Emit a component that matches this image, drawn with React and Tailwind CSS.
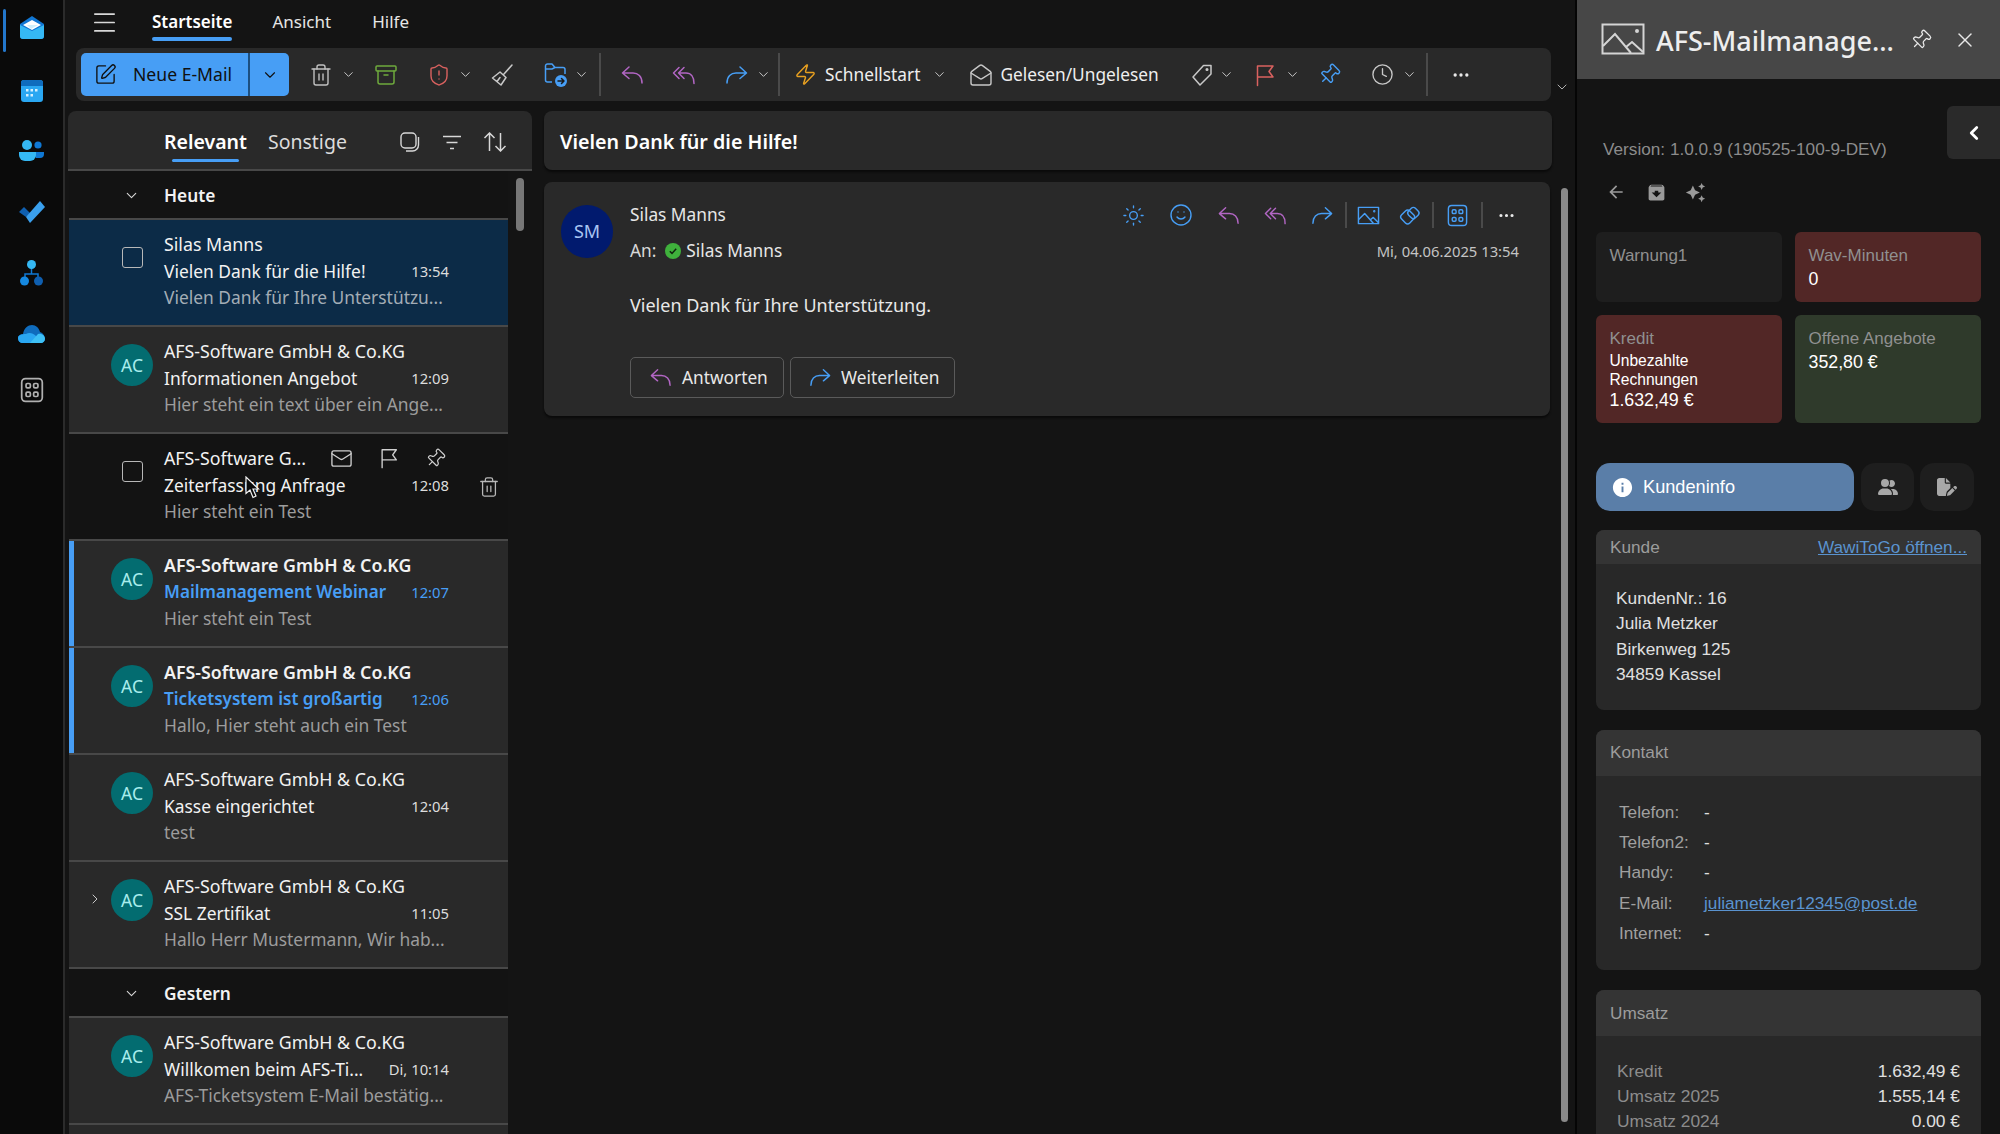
import { Archive, ChevronDown, ChevronLeft, ChevronRight, Clock, Ellipsis, Mail, MailOpen, Menu, Pin, ShieldAlert, Smile, Sun, SquarePen, Trash2, X, Zap } from 'lucide-react';
import { MdArchive, MdArrowBack, MdAutoAwesome, MdInfo } from 'react-icons/md';
import { FaFilePen, FaUserGroup } from 'react-icons/fa6';

const Ic = ({ className = '', size = 24, sw = 1.5, children }) => (
  <svg width={size} height={size} viewBox="0 0 24 24" fill="none" stroke="currentColor" strokeWidth={sw} strokeLinecap="round" strokeLinejoin="round" className={`shrink-0 ${className}`}>
    {children}
  </svg>
);

const ReplyIcon = (p) => <Ic {...p}><path d="M9 4 L2.5 10 L9 15.5 M2.5 10 H13 C18 10 22 13.5 22 20" /></Ic>;
const ReplyAllIcon = (p) => <Ic {...p}><path d="M7 4.5 L1.5 10 L7 15.5 M12 4.5 L6.5 10 L12 15.5 M6.5 10 H14 C19 10 22 14 22 20.5" /></Ic>;
const ForwardIcon = (p) => <Ic {...p}><path d="M15 4 L21.5 10 L15 15.5 M21.5 10 H11 C6 10 2 13.5 2 20" /></Ic>;
const FlagIcon = (p) => <Ic {...p}><path d="M4.5 22.5 V3 H20 L16 8.5 L20 14 H4.5" /></Ic>;
const TagIcon = (p) => <Ic {...p}><path d="M13.5 2.5 H21 V11 L10 22 L3 14 Z" /><circle cx="17" cy="6.5" r="0.8" fill="currentColor" /></Ic>;
const BroomIcon = (p) => <Ic {...p}><path d="M22 2 L14 11 M10 9 L16 14.5 L11 22 L2.5 15 Z M7 18.5 L10 14.5" /></Ic>;
const GridIcon = (p) => (
  <Ic {...p}>
    <rect x="2.5" y="1.5" width="19" height="21" rx="3.5" />
    <rect x="6.5" y="6" width="4" height="4" rx="1.2" />
    <rect x="13.5" y="6" width="4" height="4" rx="1.2" />
    <rect x="6.5" y="14" width="4" height="4" rx="1.2" />
    <rect x="13.5" y="14" width="4" height="4" rx="1.2" />
  </Ic>
);
const ImgIcon = (p) => (
  <Ic {...p}>
    <path d="M1.5 3.5 H22.5 V20.5 H1.5 Z" />
    <path d="M2 16 L8 10 L17 20 M14 16.5 L17 14 L22 19" />
    <circle cx="18" cy="7.5" r="0.5" fill="currentColor" />
  </Ic>
);
const LoopIcon = (p) => (
  <Ic {...p}>
    <rect x="3" y="7.5" width="12" height="12" rx="3.2" transform="rotate(45 9 13.5)" />
    <rect x="10" y="4.5" width="10" height="10" rx="3" transform="rotate(45 15 9.5)" />
  </Ic>
);
const FolderMove = ({ className = '' }) => (
  <svg width="24" height="26" viewBox="0 0 24 26" fill="none" className={`shrink-0 ${className}`}>
    <path d="M8 20 H3.5 A2 2 0 0 1 1.5 18 V4 A2 2 0 0 1 3.5 2 H8 L11 5.5 H19 A2 2 0 0 1 21 7.5 V12 M1.5 7 H8 L11 5.5" stroke="#479ef5" strokeWidth="1.5" strokeLinejoin="round" />
    <circle cx="17" cy="19" r="6" fill="#479ef5" />
    <path d="M14 19 H19.5 M17.5 16.5 L20 19 L17.5 21.5" stroke="#1a1a1a" strokeWidth="1.5" strokeLinecap="round" strokeLinejoin="round" />
  </svg>
);

const Chev = ({ className = '' }) => <ChevronDown size={15} strokeWidth={1.5} className={`shrink-0 text-[#d0d0d0] ${className}`} />;
const Sep = ({ className = '' }) => <div className={`h-[43px] w-[2px] shrink-0 bg-[#4a4a4a] ${className}`} />;

const RailMail = () => (
  <svg width="26" height="24" viewBox="0 0 26 24">
    <path d="M13 0 L25 8 V20 a3 3 0 0 1 -3 3 H4 a3 3 0 0 1 -3 -3 V8 Z" fill="#1177d4" />
    <path d="M4 9 L13 4 L22 9 L13 14 Z" fill="#fff" />
    <path d="M1 9 L13 15 L25 9 V20 a3 3 0 0 1 -3 3 H4 a3 3 0 0 1 -3 -3 Z" fill="#35b8f4" />
    <path d="M8 9 H19 L12 13 Z" fill="#cfeffc" />
  </svg>
);
const RailCalendar = () => (
  <svg width="22" height="22" viewBox="0 0 22 22">
    <rect x="0" y="0" width="22" height="22" rx="3" fill="#2aa7f2" />
    <path d="M0 6 V3 a3 3 0 0 1 3 -3 H19 a3 3 0 0 1 3 3 V6 Z" fill="#0f6cbd" />
    {[5, 9.5, 14].map((x) => <rect key={x} x={x} y="9" width="2.5" height="2.5" fill="#d5f0ff" />)}
    {[5, 9.5].map((x) => <rect key={x} x={x} y="14" width="2.5" height="2.5" fill="#d5f0ff" />)}
  </svg>
);
const RailPeople = () => (
  <svg width="25" height="21" viewBox="0 0 25 21">
    <circle cx="19" cy="5" r="3.6" fill="#0f78d4" />
    <path d="M14 12 H25 V14 a4 4 0 0 1 -4 4 H17 Z" fill="#0f78d4" />
    <circle cx="8" cy="5" r="5" fill="#35b8f4" />
    <path d="M0 12 H17 V15 a6 6 0 0 1 -6 6 H6 a6 6 0 0 1 -6 -6 Z" fill="#35b8f4" />
  </svg>
);
const RailTodo = () => (
  <svg width="26" height="22" viewBox="0 0 26 22">
    <path d="M0 11 L5 6 L12 13 L7 16 Z" fill="#0f5fb0" />
    <path d="M7 16 L21 0 L26 6 L11 22 Z" fill="#3aa0ee" />
  </svg>
);
const RailOrg = () => (
  <svg width="23" height="26" viewBox="0 0 23 26">
    <path d="M11.5 8 V14 M5 18 V14 H18 V18" stroke="#0f78d4" strokeWidth="1.5" fill="none" />
    <circle cx="11.5" cy="4.5" r="4.5" fill="#35b8f4" />
    <circle cx="4.5" cy="21" r="4.5" fill="#1588e0" />
    <circle cx="18.5" cy="21" r="4.5" fill="#0f5fb0" />
  </svg>
);
const RailCloud = () => (
  <svg width="27" height="18" viewBox="0 0 27 18">
    <path d="M5 9 C6 3 10 0 14 0 C18 0 21 3 22 7 C25 8 27 11 27 14 C27 16 25 18 23 18 H5 C2 18 0 16 0 13 C0 11 2 9 5 9 Z" fill="#0f6cbd" />
    <path d="M0 13 C0 10 4 9 8 9 C11 7 15 8 18 11 L24 18 H5 C2 18 0 16 0 13 Z" fill="#2aa7f2" />
    <path d="M12 18 L20 9 C24 8 27 11 27 14 C27 16 25 18 23 18 Z" fill="#3ec0f5" />
  </svg>
);

const TabItem = ({ children, active, className = '' }) => (
  <div className={`relative flex h-[48px] items-center pb-[4px] text-[17px] text-[#e6e6e6] ${active ? 'font-semibold text-white' : ''} ${className}`}>
    {children}
    {active && <div className="absolute bottom-[7px] left-0 h-[4px] w-full rounded-full bg-[#479ef5]" />}
  </div>
);

const Avatar = () => (
  <div className="flex h-[42px] w-[42px] items-center justify-center rounded-full bg-[#036c70] text-[17.5px] text-[#a8ecec]">AC</div>
);
const CheckBox = () => <div className="h-[21px] w-[21px] rounded-[3px] border-[1.5px] border-[#b8b8b8]" />;

const MailRow = ({ sender, subject, time, preview, unread, selected, expand, hover }) => (
  <div className={`relative flex h-[107px] shrink-0 border-b-[2px] border-[#484848] ${selected ? 'bg-[#0c2b47]' : hover ? 'bg-[#131313]' : 'bg-[#292929]'}`}>
    {unread && <div className="absolute inset-y-0 left-0 w-[5px] bg-[#479ef5]" />}
    {expand && <ChevronRight size={16} strokeWidth={1.5} className="absolute left-[18px] top-[29px] text-[#c8c8c8]" />}
    <div className={`w-[95px] shrink-0 ${selected || hover ? 'pl-[53px] pt-[27px]' : 'pl-[42px] pt-[17px]'}`}>
      {selected || hover ? <CheckBox /> : <Avatar />}
    </div>
    <div className="w-[285px] pt-[11px] text-[17.4px] leading-[26.5px]">
      <div className={`flex items-center whitespace-nowrap text-[17.8px] text-[#f2f2f2] ${unread ? 'font-semibold' : ''}`}>
        {sender}
        {hover && (
          <div className="ml-[24px] flex items-center gap-[25px] text-[#cfcfcf]">
            <Mail size={23} strokeWidth={1.4} />
            <Ic size={22}><path d="M4.5 22.5 V3 H20 L16 8.5 L20 14 H4.5" /></Ic>
            <Pin size={21} strokeWidth={1.4} className="rotate-45" />
          </div>
        )}
      </div>
      <div className={`flex items-center justify-between whitespace-nowrap ${unread ? 'text-[17.1px] font-semibold text-[#479ef5]' : 'text-[#f2f2f2]'}`}>
        <span>{subject}</span>
        <span className={`text-[14.8px] font-normal ${unread ? 'text-[#479ef5]' : 'text-[#dcdcdc]'}`}>{time}</span>
      </div>
      <div className={`whitespace-nowrap ${selected ? 'text-[#a3adb6]' : 'text-[#9c9c9c]'}`}>{preview}</div>
    </div>
    {hover && <Trash2 size={22} strokeWidth={1.4} className="absolute left-[409px] top-[42px] text-[#b8b8b8]" />}
    {hover && (
      <svg width="16" height="23" viewBox="0 0 16 23" className="absolute left-[176px] top-[42px]">
        <path d="M1 1 V17.5 L5 14 L8 21.5 L11 20 L8 13 H13.5 Z" fill="#0a0a0a" stroke="#f2f2f2" strokeWidth="1.2" />
      </svg>
    )}
  </div>
);

const GroupRow = ({ label }) => (
  <div className="flex h-[49px] shrink-0 items-center border-b-[2px] border-[#484848] bg-[#131313] pt-[2px] text-[17.3px] font-semibold text-[#f2f2f2]">
    <div className="w-[95px] pl-[54px]"><ChevronDown size={17} strokeWidth={1.5} className="text-[#d8d8d8]" /></div>
    {label}
  </div>
);

const StatusCard = ({ tone, label, children, h }) => (
  <div className={`rounded-[6px] pl-[13.5px] pt-[13px] ${h} ${tone}`}>
    <div className="text-[17px] leading-[22px] text-[#909090]">{label}</div>
    {children}
  </div>
);

const Section = ({ title, head, right, children }) => (
  <div className="overflow-hidden rounded-[8px] bg-[#282828]">
    <div className={`flex items-center justify-between bg-[#343434] px-[14px] pt-[1px] text-[17.2px] text-[#9c9c9c] ${head}`}>
      <span>{title}</span>
      {right}
    </div>
    {children}
  </div>
);

export default function App() {
  return (
    <div className="flex h-[1134px] w-[2000px] overflow-hidden bg-[#141414] font-['Noto_Sans',sans-serif] text-white">
      {/* Rail */}
      <nav className="relative flex w-[65px] shrink-0 flex-col items-center border-r-[2px] border-[#2b2b2b] bg-[#0a0a0a]">
        <div className="absolute left-[3px] top-[9px] h-[43px] w-[3px] rounded-full bg-[#2377cc]" />
        <div className="flex h-[56px] w-full items-center justify-center"><RailMail /></div>
        <div className="flex h-[62px] w-full items-center justify-center pt-[8px]"><RailCalendar /></div>
        <div className="flex h-[61px] w-full items-center justify-center pt-[4px]"><RailPeople /></div>
        <div className="flex h-[61px] w-full items-center justify-center pt-[4px]"><RailTodo /></div>
        <div className="flex h-[61px] w-full items-center justify-center pt-[4px]"><RailOrg /></div>
        <div className="flex h-[61px] w-full items-center justify-center pt-[4px]"><RailCloud /></div>
        <div className="mt-[-3px] flex h-[61px] w-full items-center justify-center text-[#b0b0b0]"><GridIcon size={26} sw={1.6} /></div>
      </nav>

      {/* Middle */}
      <main className="relative flex min-w-0 flex-1 flex-col">
        <div className="flex h-[48px] shrink-0 items-center pl-[25px]">
          <Menu size={29} strokeWidth={1.4} className="mb-[4px] text-[#d8d8d8]" />
          <TabItem active className="ml-[33px]">Startseite</TabItem>
          <TabItem className="ml-[40px]">Ansicht</TabItem>
          <TabItem className="ml-[41px]">Hilfe</TabItem>
        </div>

        {/* Ribbon */}
        <div className="ml-[11px] flex h-[53px] w-[1475px] shrink-0 items-center rounded-[8px] bg-[#292929] pl-[5px] text-[17.3px] text-[#eeeeee]">
          <div className="flex h-[43px] w-[208px] shrink-0 items-center rounded-[5px] bg-[#479ef5] text-[#101010]">
            <SquarePen size={23} strokeWidth={1.4} className="ml-[13px]" />
            <span className="ml-[16px] whitespace-nowrap text-[17.6px]">Neue E-Mail</span>
            <div className="ml-[16px] flex h-full flex-1 items-center justify-center border-l-[2px] border-[#1c4f80]"><ChevronDown size={18} strokeWidth={1.5} /></div>
          </div>
          <Trash2 size={24} strokeWidth={1.4} className="ml-[20px] shrink-0 text-[#c0c0c0]" />
          <Chev className="ml-[8px]" />
          <Archive size={24} strokeWidth={1.5} className="ml-[18px] shrink-0 text-[#6ea93d]" />
          <ShieldAlert size={24} strokeWidth={1.4} className="ml-[29px] shrink-0 text-[#d9615f]" />
          <Chev className="ml-[7px]" />
          <BroomIcon size={24} className="ml-[17px] text-[#c8c8c8]" />
          <FolderMove className="ml-[30px]" />
          <Chev className="ml-[6px]" />
          <Sep className="ml-[10px]" />
          <ReplyIcon size={24} className="ml-[19px] text-[#b266c4]" />
          <ReplyAllIcon size={24} className="ml-[28px] text-[#b266c4]" />
          <ForwardIcon size={24} className="ml-[29px] text-[#479ef5]" />
          <Chev className="ml-[7px]" />
          <Sep className="ml-[7px]" />
          <Zap size={23} strokeWidth={1.5} className="ml-[14px] shrink-0 text-[#e8a020]" />
          <span className="ml-[8px] whitespace-nowrap">Schnellstart</span>
          <Chev className="ml-[12px]" />
          <MailOpen size={24} strokeWidth={1.4} className="ml-[22px] shrink-0 text-[#c8c8c8]" />
          <span className="ml-[7px] whitespace-nowrap">Gelesen/Ungelesen</span>
          <TagIcon size={24} className="ml-[31px] text-[#c8c8c8]" />
          <Chev className="ml-[5px]" />
          <FlagIcon size={24} className="ml-[19px] text-[#d9615f]" />
          <Chev className="ml-[8px]" />
          <Pin size={23} strokeWidth={1.5} className="ml-[18px] shrink-0 rotate-45 text-[#479ef5]" />
          <Clock size={23} strokeWidth={1.4} className="ml-[30px] shrink-0 text-[#c8c8c8]" />
          <Chev className="ml-[8px]" />
          <Sep className="ml-[9px]" />
          <Ellipsis size={20} strokeWidth={2} className="ml-[23px] shrink-0 text-[#e8e8e8]" />
        </div>
        <ChevronDown size={16} strokeWidth={1.3} className="absolute left-[1489px] top-[79px] text-[#c8c8c8]" />

        <div className="mt-[10px] flex min-h-0 flex-1">
          {/* Mail list */}
          <section className="relative ml-[3px] flex w-[464px] shrink-0 flex-col">
            <div className="flex h-[60px] shrink-0 items-center rounded-t-[8px] border-b-[2px] border-[#484848] bg-[#292929] pl-[96px] pt-[4px] text-[19.5px]">
              <div className="relative flex h-full items-center font-semibold text-white">
                Relevant
                <div className="absolute bottom-[7px] left-[8px] right-[8px] h-[3px] rounded-full bg-[#479ef5]" />
              </div>
              <span className="ml-[21px] text-[#dcdcdc]">Sonstige</span>
              <svg width="21" height="20" viewBox="0 0 21 20" fill="none" stroke="#d8d8d8" strokeWidth="1.4" className="ml-[53px]">
                <rect x="1" y="1" width="15" height="15" rx="4" />
                <path d="M18.5 5 V13 a6 6 0 0 1 -6 6 H6" />
              </svg>
              <svg width="20" height="15" viewBox="0 0 20 15" fill="none" stroke="#d8d8d8" strokeWidth="1.5" className="ml-[21px]">
                <path d="M1 1.5 H19 M4.5 7.5 H15.5 M8 13.5 H12" />
              </svg>
              <svg width="24" height="20" viewBox="0 0 24 20" fill="none" stroke="#d8d8d8" strokeWidth="1.5" className="ml-[21px]">
                <path d="M6.5 19 V1 M1.5 6 L6.5 1 L11.5 6 M17.5 1 V19 M12.5 14 L17.5 19 L22.5 14" />
              </svg>
            </div>
            <div className="ml-[1px] flex w-[439px] flex-col">
              <GroupRow label="Heute" />
              <MailRow selected sender="Silas Manns" subject="Vielen Dank für die Hilfe!" time="13:54" preview="Vielen Dank für Ihre Unterstützu..." />
              <MailRow sender="AFS-Software GmbH & Co.KG" subject="Informationen Angebot" time="12:09" preview="Hier steht ein text über ein Ange..." />
              <MailRow hover sender="AFS-Software G..." subject="Zeiterfassung Anfrage" time="12:08" preview="Hier steht ein Test" />
              <MailRow unread sender="AFS-Software GmbH & Co.KG" subject="Mailmanagement Webinar" time="12:07" preview="Hier steht ein Test" />
              <MailRow unread sender="AFS-Software GmbH & Co.KG" subject="Ticketsystem ist großartig" time="12:06" preview="Hallo, Hier steht auch ein Test" />
              <MailRow sender="AFS-Software GmbH & Co.KG" subject="Kasse eingerichtet" time="12:04" preview="test" />
              <MailRow expand sender="AFS-Software GmbH & Co.KG" subject="SSL Zertifikat" time="11:05" preview="Hallo Herr Mustermann, Wir hab..." />
              <GroupRow label="Gestern" />
              <MailRow sender="AFS-Software GmbH & Co.KG" subject="Willkomen beim AFS-Ti..." time="Di, 10:14" preview="AFS-Ticketsystem E-Mail bestätig..." />
              <div className="h-[20px] bg-[#292929]" />
            </div>
            <div className="absolute left-[448px] top-[67px] h-[53px] w-[8px] rounded-full bg-[#777777]" />
          </section>

          {/* Reading pane */}
          <section className="ml-[12px] flex w-[1008px] shrink-0 flex-col">
            <div className="flex h-[59px] shrink-0 items-center rounded-[8px] bg-[#292929] pl-[16px] pt-[3px] text-[19.7px] font-semibold text-white shadow-[0_2px_2px_#0a0a0a]">
              Vielen Dank für die Hilfe!
            </div>
            <div className="mt-[12px] flex w-[1006px] rounded-[8px] bg-[#292929] pl-[17px] pr-[31px] pt-[20px] pb-[18px] shadow-[0_2px_2px_#0a0a0a]">
              <div className="mt-[3px] flex h-[53px] w-[52px] shrink-0 items-center justify-center rounded-full bg-[#011a6e] text-[18px] text-[#a8c4f2]">SM</div>
              <div className="ml-[17px] flex-1 text-[17.3px]">
                <div className="flex h-[26px] items-center justify-between text-[#e6e6e6]">
                  <span>Silas Manns</span>
                  <div className="flex items-center text-[#479ef5]">
                    <Sun size={23} strokeWidth={1.4} />
                    <Smile size={24} strokeWidth={1.4} className="ml-[24px]" />
                    <ReplyIcon size={23} className="ml-[24px] text-[#b266c4]" />
                    <ReplyAllIcon size={23} className="ml-[24px] text-[#b266c4]" />
                    <ForwardIcon size={23} className="ml-[24px]" />
                    <Sep className="ml-[11px] !h-[26px]" />
                    <ImgIcon size={23} className="ml-[10px]" />
                    <LoopIcon size={23} className="ml-[19px]" />
                    <Sep className="ml-[10px] !h-[26px]" />
                    <GridIcon size={23} className="ml-[12px]" />
                    <Sep className="ml-[12px] !h-[26px]" />
                    <Ellipsis size={19} strokeWidth={2} className="ml-[14px] mr-[3px] text-[#e8e8e8]" />
                  </div>
                </div>
                <div className="mt-[10px] flex h-[26px] items-center justify-between">
                  <div className="flex items-center text-[#d8d8d8]">
                    <span>An:</span>
                    <svg width="16" height="16" viewBox="0 0 16 16" className="ml-[9px]">
                      <circle cx="8" cy="8" r="8" fill="#3fb13c" />
                      <path d="M4.8 8.2 L7 10.4 L11.2 5.8" fill="none" stroke="#10240f" strokeWidth="1.5" />
                    </svg>
                    <span className="ml-[5px] text-[#e6e6e6]">Silas Manns</span>
                  </div>
                  <span className="text-[14.8px] text-[#c4c4c4]">Mi, 04.06.2025 13:54</span>
                </div>
                <div className="mt-[28px] h-[26px] text-[18px] text-[#e8e8e8]">Vielen Dank für Ihre Unterstützung.</div>
                <div className="mt-[39px] flex gap-[6px] text-[#e8e8e8]">
                  <div className="flex h-[41px] w-[154px] items-center rounded-[5px] border border-[#5a5a5a] pl-[18px]">
                    <ReplyIcon size={23} className="text-[#b266c4]" />
                    <span className="ml-[10px]">Antworten</span>
                  </div>
                  <div className="flex h-[41px] w-[165px] items-center rounded-[5px] border border-[#5a5a5a] pl-[18px]">
                    <ForwardIcon size={23} className="text-[#479ef5]" />
                    <span className="ml-[9px]">Weiterleiten</span>
                  </div>
                </div>
              </div>
            </div>
          </section>
        </div>
        <div className="absolute left-[1496px] top-[188px] h-[934px] w-[7px] rounded-full bg-[#8a8a8a]" />
      </main>

      {/* Add-in pane */}
      <aside className="relative flex w-[425px] shrink-0 flex-col border-l-[2px] border-[#050505] bg-[#141414] font-['Liberation_Sans',sans-serif]">
        <div className="flex h-[79px] shrink-0 items-center bg-[#474747] pl-[24px] pt-[3px] font-['Noto_Sans',sans-serif]">
          <svg width="44" height="32" viewBox="0 0 44 32" fill="none" stroke="#d4d4d4" strokeWidth="2" className="mb-[4px]">
            <path d="M1.5 1.5 H42.5 V30.5 H1.5 Z" />
            <path d="M2 23 L14 11 L30 30 M25 24 L31 19 L42 29" />
            <circle cx="36" cy="8" r="1" fill="#d4d4d4" />
          </svg>
          <span className="ml-[11px] whitespace-nowrap text-[27px] font-medium text-[#eeeeee]">AFS-Mailmanage...</span>
          <Pin size={22} strokeWidth={1.4} className="mb-[3px] ml-[16px] rotate-45 text-[#e8e8e8]" />
          <X size={24} strokeWidth={1.4} className="mb-[3px] ml-[21px] text-[#e8e8e8]" />
        </div>
        <div className="absolute right-0 top-[106px] flex h-[53px] w-[53px] items-center justify-center rounded-l-[6px] bg-[#2a2a2a]">
          <ChevronLeft size={22} strokeWidth={3} className="text-white" />
        </div>

        <div className="flex flex-col pl-[19px] pr-[19px]">
          <div className="ml-[7px] mt-[60px] h-[20px] text-[17.2px] leading-[20px] text-[#8c8c8c]">Version: 1.0.0.9 (190525-100-9-DEV)</div>
          <div className="ml-[10px] mt-[23px] flex h-[20px] items-center gap-[20px] text-[#9a9a9a]">
            <MdArrowBack size={20} />
            <MdArchive size={21} />
            <MdAutoAwesome size={21} className="ml-[-2px]" />
          </div>

          <div className="mt-[30px] grid grid-cols-2 gap-[13px]">
            <StatusCard tone="bg-[#1e1e1e]" label="Warnung1" h="h-[70px]" />
            <StatusCard tone="bg-[#522726]" label="Wav-Minuten" h="h-[70px]">
              <div className="mt-[1px] text-[17.8px] leading-[22px] text-white">0</div>
            </StatusCard>
            <StatusCard tone="bg-[#522726]" label="Kredit" h="h-[108px]">
              <div className="mt-[2px] text-[15.6px] leading-[18.5px] text-white">Unbezahlte<br />Rechnungen</div>
              <div className="mt-[1px] text-[17.8px] leading-[20px] text-white">1.632,49 €</div>
            </StatusCard>
            <StatusCard tone="bg-[#2f3a2b]" label="Offene Angebote" h="h-[108px]">
              <div className="mt-[1px] text-[17.8px] leading-[22px] text-white">352,80 €</div>
            </StatusCard>
          </div>

          <div className="mt-[40px] flex h-[48px]">
            <div className="flex w-[258px] items-center rounded-[14px] bg-[#5a7ea8] pl-[15px] text-[18.2px] text-white">
              <MdInfo size={23} />
              <span className="ml-[9px] pt-[1px]">Kundeninfo</span>
            </div>
            <div className="ml-[7px] flex w-[53px] items-center justify-center rounded-[14px] bg-[#1e1e1e] text-[#a8a8a8]"><FaUserGroup size={20} /></div>
            <div className="ml-[6px] flex w-[54px] items-center justify-center rounded-[14px] bg-[#1e1e1e] text-[#a8a8a8]"><FaFilePen size={20} /></div>
          </div>

          <div className="mt-[19px] flex flex-col gap-[20px]">
            <Section title="Kunde" head="h-[34px]" right={<span className="text-[#5a93cf] underline">WawiToGo öffnen...</span>}>
              <div className="pb-[22px] pl-[20px] pt-[22px] text-[17.3px] leading-[25.4px] text-[#e0e0e0]">
                <div>KundenNr.: 16</div>
                <div>Julia Metzker</div>
                <div>Birkenweg 125</div>
                <div>34859 Kassel</div>
              </div>
            </Section>
            <Section title="Kontakt" head="h-[46px]">
              <div className="pb-[22px] pl-[23px] pt-[21px] text-[17.2px] leading-[30.3px]">
                {[['Telefon:', '-'], ['Telefon2:', '-'], ['Handy:', '-'], ['E-Mail:', 'juliametzker12345@post.de'], ['Internet:', '-']].map(([k, v]) => (
                  <div key={k} className="flex">
                    <span className="w-[85px] text-[#a0a0a0]">{k}</span>
                    <span className={v === '-' ? 'text-[#e0e0e0]' : 'text-[#5a93cf] underline'}>{v}</span>
                  </div>
                ))}
              </div>
            </Section>
            <Section title="Umsatz" head="h-[46px]">
              <div className="pb-[22px] pl-[21px] pr-[21px] pt-[23px] text-[17.4px] leading-[25px]">
                {[['Kredit', '1.632,49 €'], ['Umsatz 2025', '1.555,14 €'], ['Umsatz 2024', '0.00 €']].map(([k, v]) => (
                  <div key={k} className="flex justify-between">
                    <span className="text-[#8c8c8c]">{k}</span>
                    <span className="text-[#e0e0e0]">{v}</span>
                  </div>
                ))}
              </div>
            </Section>
          </div>
        </div>
      </aside>
    </div>
  );
}
